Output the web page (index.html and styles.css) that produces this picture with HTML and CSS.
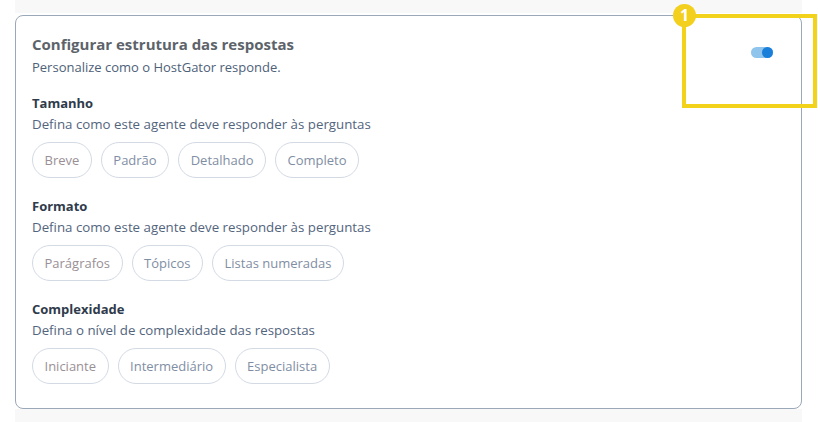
FILE: index.html
```html
<!DOCTYPE html>
<html>
<head>
  <title>Estrutura das respostas</title>
  <link rel="stylesheet" href="styles.css">
</head>
<body>
  <div class="page">
    <div class="shade"></div>
    <div class="card">
      <div class="card-head">
        <div>
          <h2 class="card-title">Configurar estrutura das respostas</h2>
          <p class="card-sub">Personalize como o HostGator responde.</p>
        </div>
        <label class="toggle">
          <input type="checkbox" checked>
          <span class="track"><span class="knob"></span></span>
        </label>
      </div>

      <div class="group">
        <h3 class="group-title">Tamanho</h3>
        <p class="group-desc">Defina como este agente deve responder às perguntas</p>
        <div class="chips">
          <button class="chip">Breve</button>
          <button class="chip">Padrão</button>
          <button class="chip">Detalhado</button>
          <button class="chip">Completo</button>
        </div>
      </div>

      <div class="group">
        <h3 class="group-title">Formato</h3>
        <p class="group-desc">Defina como este agente deve responder às perguntas</p>
        <div class="chips">
          <button class="chip">Parágrafos</button>
          <button class="chip">Tópicos</button>
          <button class="chip">Listas numeradas</button>
        </div>
      </div>

      <div class="group">
        <h3 class="group-title">Complexidade</h3>
        <p class="group-desc">Defina o nível de complexidade das respostas</p>
        <div class="chips">
          <button class="chip">Iniciante</button>
          <button class="chip">Intermediário</button>
          <button class="chip">Especialista</button>
        </div>
      </div>
    </div>
    <div class="shade"></div>

    <!-- callout around the toggle -->
    <div class="callout"></div>
    <div class="callout-badge">1</div>
  </div>
</body>
</html>
```

FILE: styles.css
```css
body {
  margin: 0;
  background: #fff;
  font-family: 'Open Sans', 'Noto Sans', Arial, sans-serif;
}
.page {
  position: relative;
  width: 787px;
  padding-left: 15px;
}
.shade {
  height: 13px;
  background: #f8f8f8;
  margin-bottom: 2px;
}
.shade:last-of-type {
  margin: 1px 0 0;
}
.card {
  border: 1px solid #9aa8ba;
  border-radius: 8px;
  padding: 18px 16px 24px 16px;
  background: #fff;
}
.card-head {
  display: flex;
  justify-content: space-between;
  align-items: flex-start;
}
.card-title {
  margin: 0;
  font-size: 15px;
  line-height: 20px;
  font-weight: 700;
  color: #5d636a;
}
.card-sub {
  margin: 4px 0 0;
  font-size: 13px;
  line-height: 18px;
  color: #4e6179;
}
.toggle {
  margin: 13px 12px 0 0;
  cursor: pointer;
}
.toggle input { display: none; }
.track {
  display: flex;
  justify-content: flex-end;
  align-items: center;
  width: 22px;
  height: 11px;
  border-radius: 6px;
  background: #8fc4ec;
}
.knob {
  width: 11px;
  height: 11px;
  border-radius: 50%;
  background: #1a7fd9;
}
.group { margin-top: 18px; }
.group + .group { margin-top: 19px; }
.group-title {
  margin: 0;
  font-size: 13px;
  line-height: 18px;
  font-weight: 700;
  color: #2f3b4b;
}
.group-desc {
  margin: 3px 0 0;
  font-size: 13.3px;
  line-height: 18px;
  color: #53657d;
}
.chips {
  display: flex;
  gap: 9px;
  margin-top: 9px;
}
.chip {
  height: 36px;
  padding: 0 11.5px;
  border: 1px solid #d3dae4;
  border-radius: 18px;
  background: #fff;
  font-family: inherit;
  font-size: 13px;
  color: #7f8ea3;
  cursor: pointer;
}
.chip:first-child { color: #9a8f95; }
.callout {
  position: absolute;
  left: 682px;
  top: 14px;
  width: 127px;
  height: 86px;
  border: 4px solid #f3d21c;
}
.callout-badge {
  position: absolute;
  left: 673px;
  top: 4px;
  width: 23px;
  height: 23px;
  border-radius: 50%;
  background: #f3cf1e;
  color: #fff;
  font-size: 16px;
  font-weight: 700;
  line-height: 23px;
  text-align: center;
}
```
